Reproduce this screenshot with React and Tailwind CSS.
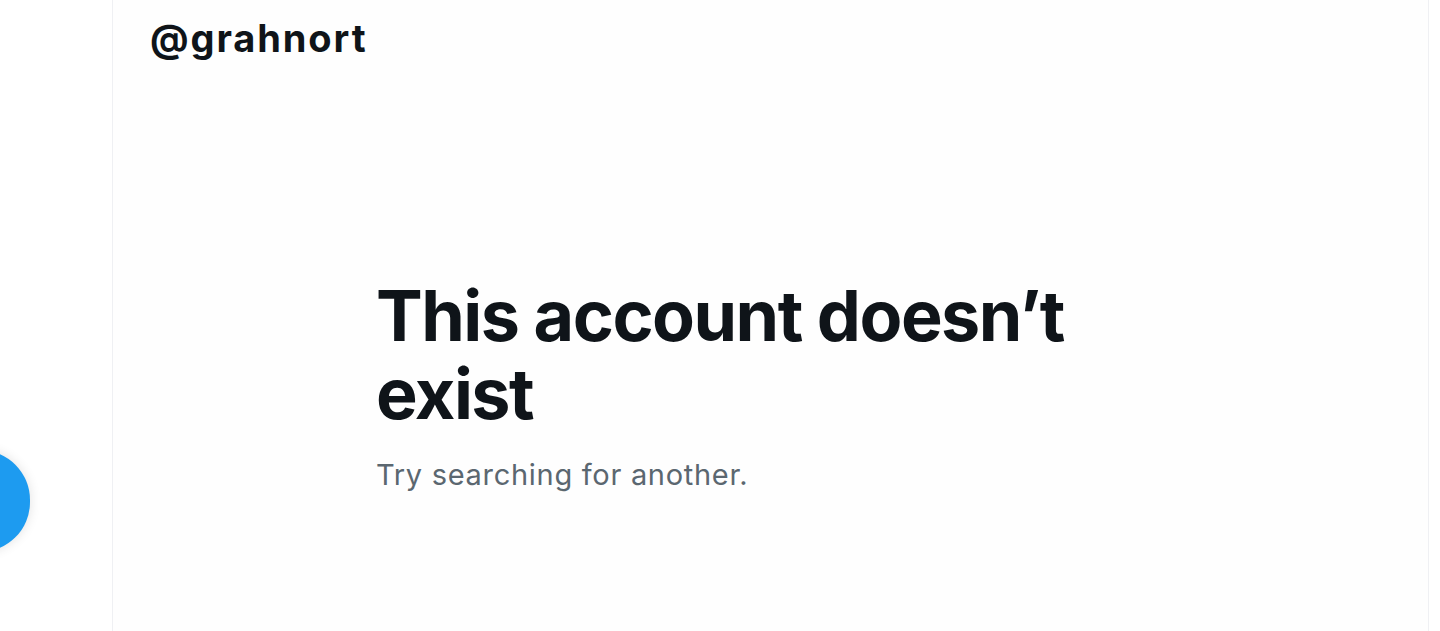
import React from "react";

export default function App() {
  return (
    <div className="relative h-[631px] w-[1440px] overflow-hidden bg-white" style={{ fontFamily: "Inter, 'Liberation Sans', sans-serif" }}>
      <div className="absolute left-[-70px] top-[450px] h-[102px] w-[100px] rounded-full bg-[#1d9bf0] shadow-[0_0_12px_rgba(0,0,0,0.12)]" />
      <div className="ml-[112px] mr-[11px] flex h-full flex-col border-x border-[#eff0f3] bg-[#fefefe]">
        <div className="pl-[37px] pt-[12px]">
          <h2 className="text-[38px] font-bold leading-[52px] tracking-[1.9px] text-[#0f1419]">@grahnort</h2>
        </div>
        <div className="pl-[263px] pt-[213px]">
          <h1 className="w-[720px] text-[70px] font-bold leading-[78px] tracking-[-1.5px] text-[#0f1419]">
            This account doesn’t exist
          </h1>
          <p className="mt-[24px] text-[29px] leading-[36px] tracking-[0.7px] text-[#5b6770]">Try searching for another.</p>
        </div>
      </div>
    </div>
  );
}
